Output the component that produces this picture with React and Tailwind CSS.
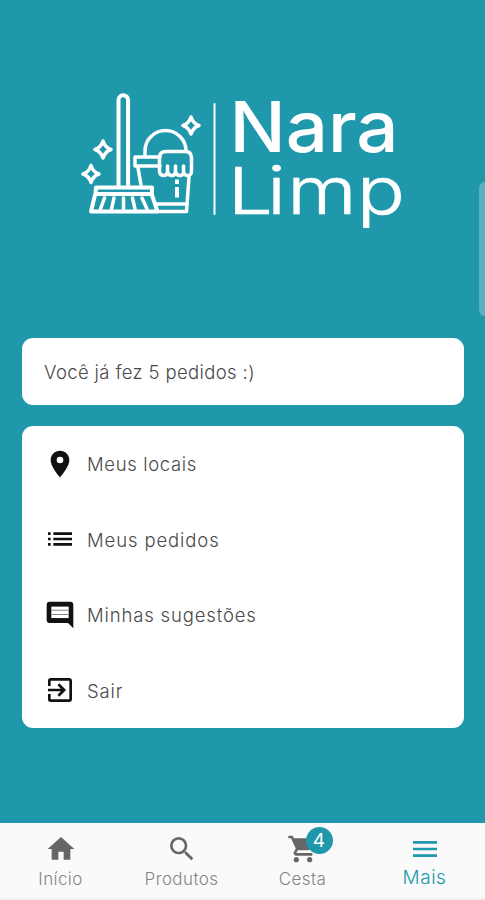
import React from 'react';

import {
  MdExitToApp,
  MdHome,
  MdList,
  MdLocationOn,
  MdMenu,
  MdSearch,
  MdShoppingCart,
} from 'react-icons/md';

const CommentIcon = ({ size, className }) => (
  <svg viewBox="0 0 24 24" width={size} height={size} className={className} fill="currentColor">
    <path d="M21.990 4c0-1.100-.890-2-1.990-2H4c-1.100 0-2 .900-2 2v12c0 1.100.900 2 2 2h14l4 4-.010-18z" />
    <path d="M5.500 5.700h13v8.600h-13z" fill="white" />
    <path d="M5.500 8h13v.800h-13zM5.500 11.200h13v.800h-13z" fill="#888888" />
  </svg>
);

const menuItems = [
  { label: 'Meus locais', icon: MdLocationOn, spacing: 'tracking-[0.65px]' },
  { label: 'Meus pedidos', icon: MdList, spacing: 'tracking-[0.88px]' },
  { label: 'Minhas sugestões', icon: CommentIcon, spacing: 'tracking-[0.85px]' },
  { label: 'Sair', icon: MdExitToApp, spacing: 'tracking-[0.85px]' },
];

const tabs = [
  { label: 'Início', icon: MdHome },
  { label: 'Produtos', icon: MdSearch },
  { label: 'Cesta', icon: MdShoppingCart, badge: 4 },
  { label: 'Mais', icon: MdMenu, active: true },
];

const Logo = () => (
  <svg
    viewBox="0 0 330 150"
    className="w-[330px] h-[150px]"
    fill="none"
    stroke="white"
    strokeWidth="4"
    strokeLinejoin="round"
    strokeLinecap="round"
    role="img"
    aria-label="Nara Limp"
  >
    {/* broom */}
    <path d="M38.500 106V20a4.800 4.800 0 0 1 9.600 0v86" />
    <path d="M16 107.500H72V114H15.500Z" />
    <path d="M15 115L11 131.500H77.500L72 115" />
    <path d="M24.500 118L20.500 129M34 118L31.500 129M43.500 118V129M52.500 118L55 129M62 118L67 129" strokeWidth="3.5" />
    {/* bucket */}
    <path d="M65 75v-4a20.500 20.500 0 0 1 41 0" strokeWidth="3.5" />
    <path d="M80 77H55V86H80M58 88L61 105M109 97L106.500 131.500H78M76 124H106" strokeWidth="3.5" />
    <path
      d="M79.500 91V77Q80 71.500 86 71.500H105Q111.500 71.500 111.500 78V91Q111.500 96 107 95.500Q103.500 95 103.500 90V86M103.500 92Q103 96 99.500 95.500Q96 95 95.500 91V86M95.500 92Q94.500 96 91.500 95.500Q88 95 87.500 91V86M87.500 92Q86.500 96 83 95.500Q79.500 95 79.500 91"
      strokeWidth="3.5"
    />
    <path d="M97 101.500V102M97 109V115.500" strokeLinecap="square" />
    {/* sparkles */}
    <path d="M111 37Q113 43.500 119 45.500Q113 47.500 111 54Q109 47.500 103 45.500Q109 43.500 111 37Z" strokeWidth="3.5" />
    <path d="M23 61Q25 67.500 31 69.500Q25 71.500 23 78Q21 71.500 15 69.500Q21 67.500 23 61Z" strokeWidth="3.5" />
    <path d="M11 85.500Q13 92 19 94Q13 96 11 102.500Q9 96 3 94Q9 92 11 85.500Z" strokeWidth="3.5" />
    <path d="M134.500 24V134" strokeWidth="2" />
    <g fill="white" className="font-['Inter',sans-serif]">
      <text x="149.500" y="72" stroke="none" fontSize="70" fontWeight="500" textLength="169" lengthAdjust="spacingAndGlyphs">
        Nara
      </text>
      <text
        x="148"
        y="133.500"
        dx="0 -4.5 1 0.5"
        strokeWidth="0.7"
        fontSize="65"
        fontWeight="300"
        textLength="177"
        lengthAdjust="spacingAndGlyphs"
      >
        Limp
      </text>
    </g>
  </svg>
);

const MenuItem = ({ label, icon: Icon, spacing }) => (
  <button type="button" className="flex h-[75.5px] w-full items-center pl-[22px] text-left">
    <Icon size={32} className="text-[#111111]" />
    <span className={`ml-[11px] pt-[3px] text-[18.5px] font-light text-[#4a4a4a] ${spacing}`}>{label}</span>
  </button>
);

const Tab = ({ label, icon: Icon, badge, active }) => (
  <button
    type="button"
    className={`flex flex-1 flex-col items-center pt-[10px] ${active ? 'pl-[1px] text-[#2098ab]' : 'text-[#666666]'}`}
  >
    <span className="relative">
      <Icon size={32} />
      {badge && (
        <span className="absolute -top-[6px] left-[19px] flex h-[27px] w-[27px] items-center justify-center rounded-full bg-[#2098ab] pt-[2px] text-[19px] text-white">
          {badge}
        </span>
      )}
    </span>
    <span
      className={
        active
          ? 'text-[19px] leading-[26px] font-light tracking-[0.5px]'
          : 'pt-[1px] text-[17px] leading-[26px] font-light tracking-[0.4px] text-[#858585]'
      }
    >
      {label}
    </span>
  </button>
);

const App = () => {
  return (
    <div className="relative flex h-[900px] w-[485px] flex-col overflow-hidden bg-[#2098ab] font-['Inter',sans-serif]">
      <header className="flex h-[338px] shrink-0 items-start pt-20 pl-20">
        <Logo />
      </header>

      <main className="flex flex-1 flex-col gap-[21.5px] pr-[21px] pl-[22px]">
        <section className="flex h-[66.5px] items-center rounded-[11px] bg-white pt-[3px] pl-[22px] text-[18.5px] font-light tracking-[0.37px] text-[#4a4a4a]">
          Você já fez 5 pedidos :)
        </section>
        <section className="rounded-[11px] bg-white">
          {menuItems.map((item) => (
            <MenuItem key={item.label} {...item} />
          ))}
        </section>
      </main>

      <nav className="flex h-[77.5px] shrink-0 border-b-2 border-[#f0f0f0] bg-[#fafafa]">
        {tabs.map((tab) => (
          <Tab key={tab.label} {...tab} />
        ))}
      </nav>

      <div className="absolute top-[182px] -right-[6px] h-[134px] w-[12px] rounded-[6px] bg-[#5bb1bf]" />
    </div>
  );
};

export default App;
